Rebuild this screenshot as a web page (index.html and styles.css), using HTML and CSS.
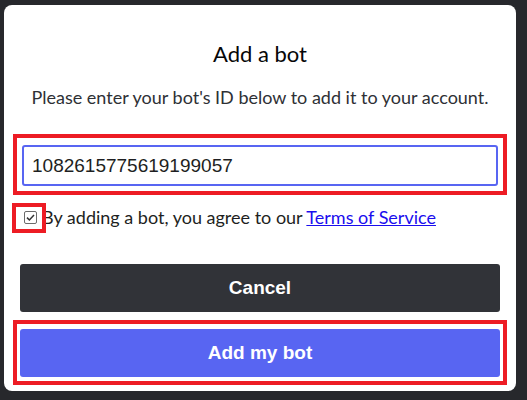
FILE: index.html
```html
<!DOCTYPE html>
<html lang="en">
<head>
<meta charset="utf-8">
<title>Add a bot</title>
<link rel="stylesheet" href="styles.css">
</head>
<body>
<div class="card">
  <h1 class="title">Add a bot</h1>
  <p class="subtitle">Please enter your bot's ID below to add it to your account.</p>
  <div class="mark mark-input">
    <input class="id-input" type="text" value="1082615775619199057">
  </div>
  <label class="agree">
    <span class="mark-check"></span>
    <svg class="check" width="13" height="13" viewBox="0 0 13 13" aria-hidden="true">
      <rect x="0.5" y="0.5" width="12" height="12" rx="1.5" fill="#fff" stroke="#6b6b6b"/>
      <path d="M3 6.6 L5.4 9 L10 4" fill="none" stroke="#333" stroke-width="1.5"/>
    </svg>
    <span class="agree-text">By adding a bot, you agree to our <a href="#" class="tos">Terms of Service</a></span>
  </label>
  <button class="btn btn-cancel" type="button">Cancel</button>
  <div class="mark mark-add">
    <button class="btn btn-add" type="button">Add my bot</button>
  </div>
</div>
</body>
</html>
```
FILE: styles.css
```css
* { box-sizing: border-box; }
html, body { margin: 0; padding: 0; }
body {
  background: #27282c;
  width: 527px;
  height: 400px;
  overflow: hidden;
  font-family: Lato, "Noto Sans", sans-serif;
}
.card {
  margin: 5px 11px 0 4px;
  width: 512px;
  height: 386px;
  background: #ffffff;
  border-radius: 8px;
  padding: 34px 16px 6px;
  display: flex;
  flex-direction: column;
}
.title {
  margin: 0;
  font-size: 22px;
  line-height: 29px;
  font-weight: 400;
  color: #060607;
  text-align: center;
}
.subtitle {
  margin: 18px 0 0;
  font-size: 18px;
  line-height: 22px;
  color: #2e3035;
  text-align: center;
}
.mark {
  border: 4px solid #ed1c24;
  margin-left: -7px;
  margin-right: -7px;
}
.mark-input {
  margin-top: 26px;
  padding: 7px 5px 5px;
}
.id-input {
  display: block;
  width: 100%;
  height: 41px;
  border: 2px solid #5865f2;
  border-radius: 3px;
  padding: 0 8px;
  font-family: "Liberation Sans", Arial, sans-serif;
  font-size: 19px;
  color: #1e1f22;
  outline: none;
}
.agree {
  position: relative;
  margin-top: 11px;
  display: flex;
  align-items: center;
  font-size: 18px;
  line-height: 22px;
  color: #1e1f22;
}
.check {
  margin-left: 4px;
  margin-right: 5px;
  flex: none;
}
.mark-check {
  position: absolute;
  left: -8px;
  top: -3px;
  width: 34px;
  height: 30px;
  border: 4px solid #ed1c24;
}
.tos { color: #1a0dee; text-decoration: underline; }
.btn {
  display: block;
  width: 100%;
  height: 48px;
  border: 0;
  border-radius: 3px;
  color: #ffffff;
  font-family: "Liberation Sans", Arial, sans-serif;
  font-weight: 700;
  font-size: 19px;
}
.btn-cancel {
  margin-top: 36px;
  background: #313338;
}
.mark-add {
  margin-top: 8px;
  padding: 5px 3px 4px;
}
.btn-add { background: #5865f2; }
```
